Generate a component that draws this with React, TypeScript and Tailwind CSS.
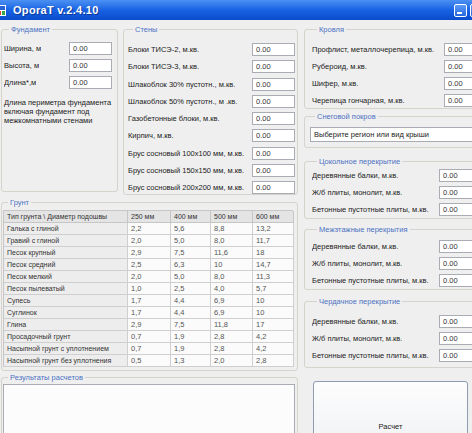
import React from "react"

const roof = [
  "Профлист, металлочерепица, м.кв.",
  "Рубероид, м.кв.",
  "Шифер, м.кв.",
  "Черепица гончарная, м.кв.",
]

const walls = [
  "Блоки ТИСЭ-2, м.кв.",
  "Блоки ТИСЭ-3, м.кв.",
  "Шлакоблок 30% пустотн., м.кв.",
  "Шлакоблок 50% пустотн., м .кв.",
  "Газобетонные блоки, м.кв.",
  "Кирпич, м.кв.",
  "Брус сосновый 100х100 мм, м.кв.",
  "Брус сосновый 150х150 мм, м.кв.",
  "Брус сосновый 200х200 мм, м.кв.",
]

const floors = [
  "Деревянные балки, м.кв.",
  "Ж/б плиты, монолит, м.кв.",
  "Бетонные пустотные плиты, м.кв.",
]

const soil = [
  ["Галька с глиной", "2,2", "5,6", "8,8", "13,2"],
  ["Гравий с глиной", "2,0", "5,0", "8,0", "11,7"],
  ["Песок крупный", "2,9", "7,5", "11,6", "18"],
  ["Песок средний", "2,5", "6,3", "10", "14,7"],
  ["Песок мелкий", "2,0", "5,0", "8,0", "11,3"],
  ["Песок пылеватый", "1,0", "2,5", "4,0", "5,7"],
  ["Супесь", "1,7", "4,4", "6,9", "10"],
  ["Суглинок", "1,7", "4,4", "6,9", "10"],
  ["Глина", "2,9", "7,5", "11,8", "17"],
  ["Просадочный грунт", "0,7", "1,9", "2,8", "4,2"],
  ["Насыпной грунт с уплотнением", "0,7", "1,9", "2,8", "4,2"],
  ["Насыпной грунт без уплотнения", "0,5", "1,3", "2,0", "2,8"],
]

// floor groups: title, outer spacing/height, inner offset of first row
const floorGroups = [
  { title: "Цокольное перекрытие", box: "mt-[9px] h-[62px]", inner: "mt-[3px]" },
  { title: "Межэтажные перекрытия", box: "mt-[6px] h-[65px]", inner: "mt-[6px]" },
  { title: "Чердачное перекрытие", box: "mt-[7px] h-[71px]", inner: "mt-[9px]" },
]

function Group({ title, className, children }: { title: string; className?: string; children?: React.ReactNode }) {
  return (
    <fieldset className={`rounded-[3px] border border-[#d6d3cc] ${className ?? ""}`}>
      <legend className="ml-[5px] px-[2px] text-[7.5px] leading-[9px] text-[#4d72c2]">{title}</legend>
      {children}
    </fieldset>
  )
}

function Field() {
  return (
    <div className="flex h-[13px] w-[43px] shrink-0 items-center border border-[#a9adb3] bg-white pl-[3px] text-[7.5px] text-[#333]">
      0.00
    </div>
  )
}

function Row({ label }: { label: string }) {
  return (
    <div className="flex items-center justify-between">
      <span className="truncate">{label}</span>
      <Field />
    </div>
  )
}

export default function App() {
  return (
    <div className="h-[433px] w-[472px] overflow-hidden bg-[#efefef] font-['Liberation_Sans',Arial,sans-serif] text-[7.5px] leading-[9px] text-[#222]">
      <div className="w-[505px]">
        {/* title bar */}
        <div className="flex h-[20px] items-center bg-linear-to-b from-[#4b90f2] via-[#1862e4] to-[#0a4ccb] pr-[6px]">
          <svg width="7" height="11" viewBox="0 0 7 11">
            <rect x="-4" y="0" width="10" height="11" fill="#fff" />
            <rect x="-3" y="1" width="8" height="4" fill="#2a62d8" />
            <rect x="-3" y="6" width="4" height="4" fill="#e23b2e" />
            <rect x="2" y="6" width="3" height="4" fill="#3aa846" />
          </svg>
          <span className="ml-[6px] text-[11px] font-bold tracking-[0.3px] text-white [text-shadow:1px_1px_0_#0a3a9a]">OporaT v.2.4.10</span>
          <div className="ml-auto flex gap-[3px]">
            <div className="relative h-[13px] w-[13px] rounded-[2px] border border-white bg-linear-to-b from-[#5d9bf5] to-[#2566e0]">
              <div className="absolute bottom-[2px] left-[2px] h-[2px] w-[5px] bg-white" />
            </div>
            <div className="relative h-[13px] w-[13px] rounded-[2px] border border-white bg-linear-to-b from-[#5d9bf5] to-[#2566e0]">
              <div className="absolute left-[2px] top-[2px] h-[7px] w-[7px] border border-t-2 border-white" />
            </div>
            <div className="h-[13px] w-[13px] rounded-[2px] border border-white bg-[#e0532c]" />
          </div>
        </div>

        <div className="flex">
          {/* left block */}
          <div className="flex w-[300px] flex-col">
            <div className="mt-[5px] flex items-start">
              <Group title="Фундамент" className="ml-[1px] h-[167px] w-[117px] pl-[2px] pr-[5px]">
                <div className="mt-[8px] flex flex-col gap-[4px]">
                  <Row label="Ширина, м" />
                  <Row label="Высота, м" />
                  <Row label="Длина*,м" />
                </div>
                <p className="mt-[9px]">
                  Длина периметра фундамента
                  <br />
                  включая фундамент под
                  <br />
                  межкомнатными стенами
                </p>
              </Group>
              <Group title="Стены" className="ml-[5px] h-[170px] w-[175px] pl-[4px] pr-[2px]">
                <div className="mt-[9px] flex flex-col gap-[4.25px]">
                  {walls.map((w) => (
                    <Row key={w} label={w} />
                  ))}
                </div>
              </Group>
            </div>

            <Group title="Грунт" className="ml-[1px] mt-[3px] w-[297px] pb-[3px] pl-[1px]">
              <div className="mt-[3px] grid w-[290px] grid-cols-[124px_43px_40px_42px_41px] border-l border-t border-[#c6c6c6]">
                {["Тип грунта \\ Диаметр подошвы", "250 мм", "400 мм", "500 мм", "600 мм"].map((h) => (
                  <div key={h} className="flex h-[12px] items-center border-b border-r border-[#c6c6c6] bg-[#e4e4e4] pl-[3px] text-[7px] text-[#333]">
                    {h}
                  </div>
                ))}
                {soil.map((r) =>
                  r.map((c, i) => (
                    <div
                      key={r[0] + i}
                      className={`flex h-[12px] items-center border-b border-r border-[#cfcfcf] pl-[3px] ${
                        i === 0 ? "bg-[#ededed] text-[7px] text-[#333]" : "bg-[#fbfbfb] text-[7.5px] text-[#555]"
                      }`}
                    >
                      {c}
                    </div>
                  ))
                )}
              </div>
            </Group>

            <Group title="Результаты расчетов" className="ml-[1px] mt-[2px] h-[80px] w-[297px] pl-[1px]">
              <div className="mt-[2px] h-[70px] w-[292px] border border-[#a9adb3] bg-[#fcfcfc]" />
            </Group>
          </div>

          {/* right block */}
          <div className="ml-[4px] flex w-[185px] flex-col">
            <Group title="Кровля" className="mt-[5px] h-[84px] pl-[7px] pr-[1px]">
              <div className="mt-[9px] flex flex-col gap-[4px]">
                {roof.map((r) => (
                  <Row key={r} label={r} />
                ))}
              </div>
            </Group>
            <Group title="Снеговой покров" className="mt-[3px] h-[36px] pl-[5px]">
              <div className="mt-[6px] flex h-[15px] items-center border border-[#a9adb3] bg-white pl-[3px]">
                Выберите регион или вид крыши
              </div>
            </Group>
            {floorGroups.map((g) => (
              <Group key={g.title} title={g.title} className={`${g.box} pl-[7px] pr-[6px]`}>
                <div className={`${g.inner} flex flex-col gap-[4px]`}>
                  {floors.map((f) => (
                    <Row key={f} label={f} />
                  ))}
                </div>
              </Group>
            ))}
            <button className="ml-[9px] mt-[13px] h-[90px] w-[155px] shrink-0 rounded-[3px] border border-[#8e9db4] bg-linear-to-b from-[#fdfdfd] to-[#eceef2] text-[7.5px] text-[#222]">
              Расчет
            </button>
          </div>
        </div>
      </div>
    </div>
  )
}
